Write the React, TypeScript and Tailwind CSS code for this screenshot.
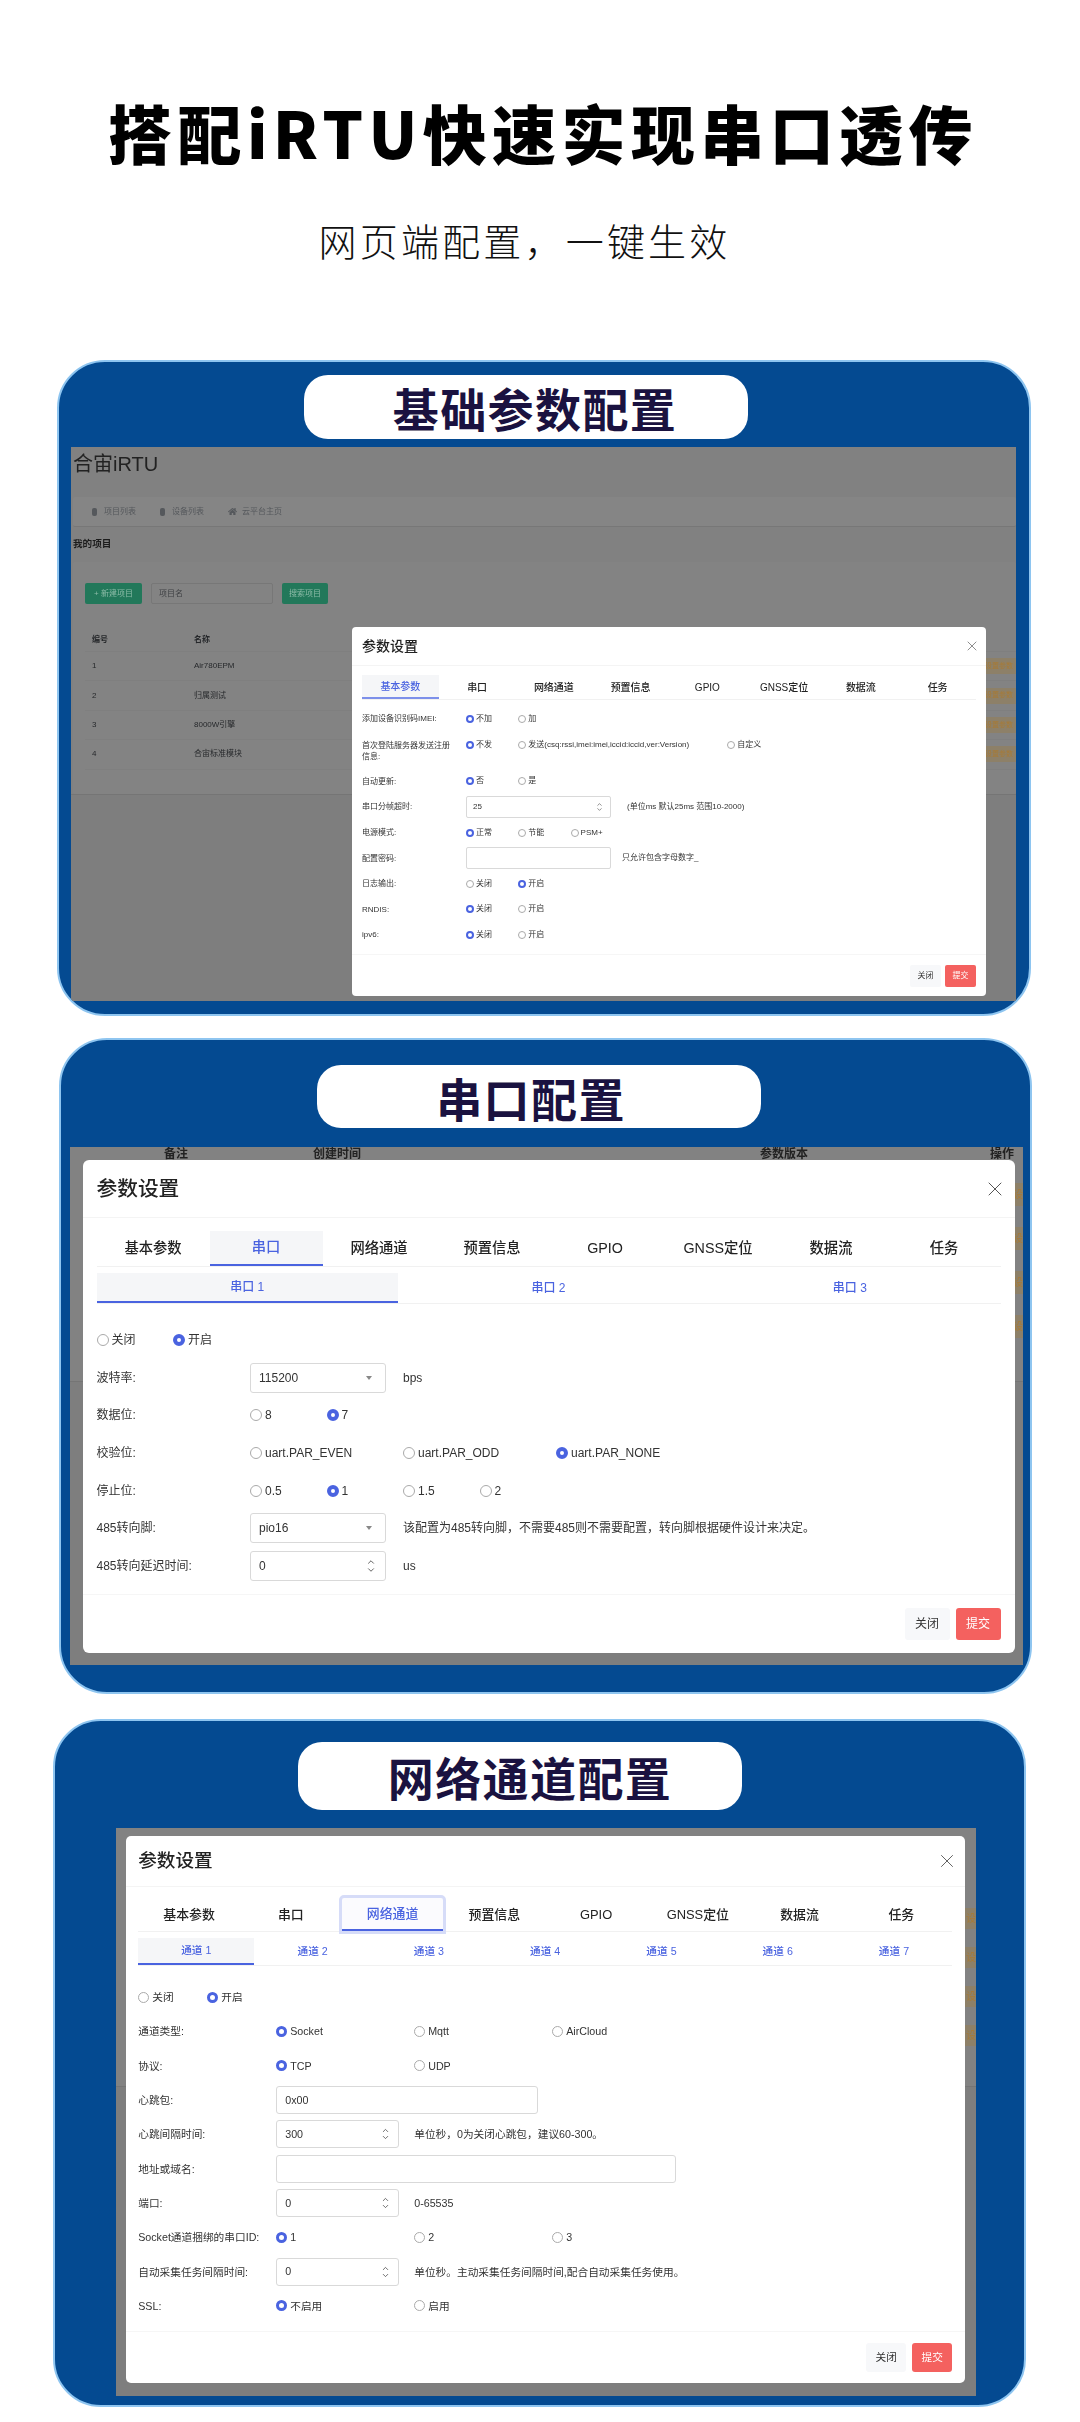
import { ChevronDown, ChevronUp, X } from "lucide-react";
import { FaHome } from "react-icons/fa";

type Theme = {
  modal: string;
  head: string;
  title: string;
  close: number;
  closeOffset: string;
  tabsWrap: string;
  tab: string;
  tabOn: string;
  subWrap: string;
  subTab: string;
  subOn: string;
  body: string;
  row: string;
  text: string;
  label: string;
  radio: string;
  radioOn: string;
  optGap: string;
  field: string;
  fieldPad: string;
  caret: string;
  spin: number;
  foot: string;
  btn: string;
};

const small: Theme = {
  modal: "left-[281px] top-[180px] w-[634px] h-[369px] px-[10px] rounded-[4px]",
  head: "h-[39px] -mx-[10px] px-[10px]",
  title: "text-[14px] font-medium",
  close: 16,
  closeOffset: "-mr-[4px]",
  tabsWrap: "mt-[9px] h-[25px]",
  tab: "w-[76.8px] text-[10px] font-medium",
  tabOn: "border-b-2 border-[#7d90ea] bg-[#f5f6f8] text-[#4a63e0]",
  subWrap: "hidden",
  subTab: "",
  subOn: "",
  body: "pt-[6px] h-[255px] -mx-[10px] px-[10px]",
  row: "h-[25.6px]",
  text: "text-[8px]",
  label: "w-[104px] pr-[12px] leading-[11px]",
  radio: "w-[8px] h-[8px] border-[0.7px] border-[#aaa]",
  radioOn: "w-[8px] h-[8px] border-[2.5px] border-[#4a63e0]",
  optGap: "gap-[2px]",
  field: "h-[22px] rounded-[2px]",
  fieldPad: "pl-[6px] pr-[7px]",
  caret: "",
  spin: 7,
  foot: "pt-[10px] gap-[4px]",
  btn: "w-[31px] h-[22px] text-[8px] rounded-[2px]",
};

const large: Theme = {
  modal: "left-[12.5px] top-[13px] w-[932px] h-[493px] px-[14px] rounded-[6px]",
  head: "h-[58px] -mx-[14px] px-[14px]",
  title: "text-[20.7px] font-medium",
  close: 24,
  closeOffset: "-mr-[6px]",
  tabsWrap: "mt-[13px] h-[36px]",
  tab: "w-[113px] text-[14.3px] font-medium",
  tabOn: "border-b-2 border-[#4a63e0] bg-[#f5f6f8] text-[#4a63e0]",
  subWrap: "mt-[6px] h-[31px]",
  subTab: "w-[301.7px] text-[12px] font-medium text-[#4a63e0]",
  subOn: "border-b-2 border-[#4a63e0] bg-[#f5f6f8]",
  body: "pt-[17px] h-[291px] -mx-[14px] px-[14px]",
  row: "h-[37.7px]",
  text: "text-[12px]",
  label: "w-[153.5px]",
  radio: "w-[12px] h-[12px] border-[1.5px] border-[#aaa]",
  radioOn: "w-[12px] h-[12px] border-[4px] border-[#4a63e0]",
  optGap: "gap-[3px]",
  field: "h-[30px] rounded-[3px]",
  fieldPad: "pl-[8px] pr-[9px]",
  caret: "border-l-[3.5px] border-r-[3.5px] border-t-[4px]",
  spin: 10,
  foot: "pt-[13px] gap-[6px]",
  btn: "w-[45px] h-[32px] text-[12px] rounded-[3px]",
};

const medium: Theme = {
  modal: "left-[9.7px] top-[8px] w-[839px] h-[547px] px-[12.5px] rounded-[5px]",
  head: "h-[51px] -mx-[12.5px] px-[12.5px]",
  title: "text-[18.6px] font-medium",
  close: 22,
  closeOffset: "-mr-[5.5px]",
  tabsWrap: "mt-[11px] h-[34px]",
  tab: "w-[101.8px] text-[12.9px] font-medium",
  tabOn: "border-b-2 border-[#4a63e0] text-[#4a63e0] rounded-t-[2px] outline outline-3 outline-[#d6dcf8] bg-[#fbfbfe]",
  subWrap: "mt-[6px] h-[28px]",
  subTab: "w-[116.3px] text-[10.7px] font-medium text-[#4a63e0]",
  subOn: "border-b-2 border-[#4a63e0] bg-[#f5f6f8]",
  body: "pt-[14px] h-[366px] -mx-[12.5px] px-[12.5px]",
  row: "h-[34.3px]",
  text: "text-[10.7px]",
  label: "w-[138px]",
  radio: "w-[11px] h-[11px] border-[1.3px] border-[#aaa]",
  radioOn: "w-[11px] h-[11px] border-[3.6px] border-[#4a63e0]",
  optGap: "gap-[3px]",
  field: "h-[28px] rounded-[3px]",
  fieldPad: "pl-[8px] pr-[8px]",
  caret: "",
  spin: 9,
  foot: "pt-[11px] gap-[6px]",
  btn: "w-[40px] h-[29px] text-[10.7px] rounded-[3px]",
};

const mainTabs = ["基本参数", "串口", "网络通道", "预置信息", "GPIO", "GNSS定位", "数据流", "任务"];

function Opt({ t, label, on, width }: { t: Theme; label: string; on?: boolean; width: string }) {
  return (
    <div className={`flex items-center ${t.optGap} ${width}`}>
      <span className={`shrink-0 rounded-full bg-white ${on ? t.radioOn : t.radio}`} />
      <span className="whitespace-nowrap">{label}</span>
    </div>
  );
}

function Row({ t, label, children, top }: { t: Theme; label?: string; children: React.ReactNode; top?: boolean }) {
  return (
    <div className={`flex ${top ? "items-start" : `items-center ${t.row}`} ${t.text} text-[#333]`}>
      {label !== undefined && <div className={`shrink-0 ${t.label}`}>{label}</div>}
      {children}
    </div>
  );
}

function Field({ t, value, width, kind }: { t: Theme; value?: string; width: string; kind?: "select" | "number" }) {
  return (
    <div
      className={`flex shrink-0 items-center justify-between border border-[#d9d9d9] bg-white ${t.field} ${t.fieldPad} ${width}`}
    >
      <span>{value}</span>
      {kind === "select" && <span className={`mr-[4px] border-transparent border-t-[#888] ${t.caret}`} />}
      {kind === "number" && (
        <span className="flex flex-col text-[#444]">
          <ChevronUp size={t.spin} strokeWidth={2} className="-mb-[1px]" />
          <ChevronDown size={t.spin} strokeWidth={2} className="-mt-[1px]" />
        </span>
      )}
    </div>
  );
}

function Modal({
  t,
  active,
  subs,
  children,
}: {
  t: Theme;
  active: number;
  subs?: string[];
  children: React.ReactNode;
}) {
  return (
    <div className={`absolute flex flex-col bg-white text-[#222] ${t.modal}`}>
      <div className={`flex shrink-0 items-center justify-between border-b border-[#f4f4f4] ${t.head}`}>
        <span className={t.title}>参数设置</span>
        <X size={t.close} strokeWidth={1} className={`text-[#555] ${t.closeOffset}`} />
      </div>
      <div className={`flex shrink-0 border-b border-[#f1f1f1] ${t.tabsWrap}`}>
        {mainTabs.map((name, i) => (
          <div key={name} className={`flex items-center justify-center ${t.tab} ${i === active ? t.tabOn : ""}`}>
            {name}
          </div>
        ))}
      </div>
      {subs && (
        <div className={`flex shrink-0 border-b border-[#f1f1f1] ${t.subWrap}`}>
          {subs.map((name, i) => (
            <div key={name} className={`flex items-center justify-center ${t.subTab} ${i === 0 ? t.subOn : ""}`}>
              {name}
            </div>
          ))}
        </div>
      )}
      <div className={`shrink-0 border-b border-[#f6f6f6] ${t.body}`}>{children}</div>
      <div className={`flex justify-end ${t.foot}`}>
        <div className={`flex items-center justify-center bg-[#f7f8fa] text-[#333] ${t.btn}`}>关闭</div>
        <div className={`flex items-center justify-center bg-[#f4615f] text-white ${t.btn}`}>提交</div>
      </div>
    </div>
  );
}

function Panel({
  wrap,
  pill,
  shot,
  title,
  children,
}: {
  wrap: string;
  pill: string;
  shot: string;
  title: string;
  children: React.ReactNode;
}) {
  return (
    <section className={`overflow-hidden rounded-[48px] border-2 border-[#8ec5f0] bg-[#044a91] ${wrap}`}>
      <div
        className={`flex items-center justify-center rounded-[24px] bg-white text-[46px] leading-none font-bold tracking-[1.4px] text-[#1a1240] font-['Noto_Sans_CJK_SC',sans-serif] ${pill}`}
      >
        {title}
      </div>
      <div className={`relative overflow-hidden bg-[#7e7e7e] blur-[0.3px] ${shot}`}>{children}</div>
    </section>
  );
}

function BasicBackdrop() {
  const rows = [
    ["1", "Air780EPM"],
    ["2", "归属测试"],
    ["3", "8000W引擎"],
    ["4", "合宙标准模块"],
  ];
  return (
    <div className="h-[348px] border-b border-[#757575] bg-[#818181] pl-[2px] text-[#26282b]">
      <div className="h-[50px] pt-[3px] text-[20px] leading-[28px] text-[#222]">合宙iRTU</div>
      <div className="flex h-[30px] items-center rounded-[2px] border-b border-[#777] bg-[#858585] pl-[19px] text-[8px] text-[#55585c]">
        <span className="h-[8px] w-[5px] rounded-[2px] bg-[#55585c]" />
        <span className="ml-[7px] w-[56px]">项目列表</span>
        <span className="h-[8px] w-[5px] rounded-[2px] bg-[#55585c]" />
        <span className="ml-[7px] w-[56px]">设备列表</span>
        <FaHome size={9} />
        <span className="ml-[5px]">云平台主页</span>
      </div>
      <div className="flex h-[35px] items-center text-[9.6px] font-bold text-[#1c1c1c]">我的项目</div>
      <div className="h-[232px] rounded-[2px] bg-[#838383] pt-[21px] pl-[12px]">
        <div className="flex h-[21px] items-center gap-[9px] text-[8px]">
          <div className="flex h-full w-[57px] items-center justify-center rounded-[2px] bg-[#22785a] text-[#8dbca8]">+ 新建项目</div>
          <div className="flex h-full w-[122px] items-center rounded-[2px] border border-[#777] pl-[7px] text-[#3f4144]">项目名</div>
          <div className="flex h-full w-[46px] items-center justify-center rounded-[2px] bg-[#22785a] text-[#8dbca8]">搜索项目</div>
        </div>
        <div className="mt-[24px] flex h-[24px] items-center border-b border-[#7f7f7f] text-[8px] font-bold">
          <span className="ml-[7px] w-[102px]">编号</span>
          <span>名称</span>
        </div>
        {rows.map(([no, name]) => (
          <div key={no} className="flex h-[29.4px] items-center border-b border-[#7f7f7f] text-[8px]">
            <span className="ml-[7px] w-[102px]">{no}</span>
            <span>{name}</span>
            <span className="ml-auto flex h-[16px] w-[40px] items-center justify-end rounded-l-[2px] bg-[#8d8068] pr-[3px] text-[7px] whitespace-nowrap text-[#a87a35]">
              设置参数
            </span>
          </div>
        ))}
      </div>
    </div>
  );
}

function SideFlags({ height, list, flag }: { height: string; list: string; flag: string }) {
  return (
    <div className={`flex flex-col items-end bg-[#828282] ${height} ${list}`}>
      {[0, 1, 2, 3].map((i) => (
        <div key={i} className={`flex items-center justify-end overflow-hidden bg-[#8d8068] text-[#a87a35] ${flag}`}>
          设
        </div>
      ))}
    </div>
  );
}

export default function App() {
  return (
    <div className="h-[2422px] w-[1080px] overflow-hidden bg-white font-['Liberation_Sans','Noto_Sans_CJK_SC',sans-serif]">
      <h1 className="mt-[91px] h-[80px] pl-[6px] text-center text-[64px] leading-[80px] font-black tracking-[5.4px] text-black font-['Noto_Sans_CJK_SC',sans-serif]">
        搭配iRTU快速实现串口透传
      </h1>
      <p className="mt-[44px] h-[50px] pr-[31px] text-center text-[38px] leading-[50px] font-light tracking-[3.2px] text-[#111] font-['Noto_Sans_CJK_SC',sans-serif]">
        网页端配置，一键生效
      </p>

      {/* 基础参数 */}
      <Panel
        wrap="mt-[95px] ml-[57px] h-[656px] w-[974px]"
        pill="mt-[13px] ml-[245px] h-[64px] w-[444px] pl-[18px]"
        shot="mt-[8px] ml-[12px] h-[554px] w-[945px]"
        title="基础参数配置"
      >
        <BasicBackdrop />
        <Modal t={small} active={0}>
          <Row t={small} label="添加设备识别码IMEI:">
            <Opt t={small} label="不加" on width="w-[52.3px]" />
            <Opt t={small} label="加" width="w-[52.3px]" />
          </Row>
          <div className="h-[37px] pt-[8px]">
            <Row t={small} label="首次登陆服务器发送注册信息:" top>
              <Opt t={small} label="不发" on width="w-[52.3px] h-[11px]" />
              <Opt t={small} label="发送(csq:rssi,imei:imei,iccid:iccid,ver:Version)" width="w-[209px] h-[11px]" />
              <Opt t={small} label="自定义" width="w-[52.3px] h-[11px]" />
            </Row>
          </div>
          <Row t={small} label="自动更新:">
            <Opt t={small} label="否" on width="w-[52.3px]" />
            <Opt t={small} label="是" width="w-[52.3px]" />
          </Row>
          <Row t={small} label="串口分帧超时:">
            <Field t={small} value="25" width="w-[145px]" kind="number" />
            <span className="ml-[16px]">(单位ms 默认25ms 范围10-2000)</span>
          </Row>
          <Row t={small} label="电源模式:">
            <Opt t={small} label="正常" on width="w-[52.3px]" />
            <Opt t={small} label="节能" width="w-[52.3px]" />
            <Opt t={small} label="PSM+" width="w-[52.3px]" />
          </Row>
          <Row t={small} label="配置密码:">
            <Field t={small} width="w-[145px]" />
            <span className="ml-[11px]">只允许包含字母数字_</span>
          </Row>
          <Row t={small} label="日志输出:">
            <Opt t={small} label="关闭" width="w-[52.3px]" />
            <Opt t={small} label="开启" on width="w-[52.3px]" />
          </Row>
          <Row t={small} label="RNDIS:">
            <Opt t={small} label="关闭" on width="w-[52.3px]" />
            <Opt t={small} label="开启" width="w-[52.3px]" />
          </Row>
          <Row t={small} label="ipv6:">
            <Opt t={small} label="关闭" on width="w-[52.3px]" />
            <Opt t={small} label="开启" width="w-[52.3px]" />
          </Row>
        </Modal>
      </Panel>

      {/* 串口 */}
      <Panel
        wrap="mt-[22px] ml-[59px] h-[656px] w-[973px]"
        pill="mt-[25px] ml-[256px] h-[63px] w-[444px] pr-[16px]"
        shot="mt-[19px] ml-[9px] h-[518px] w-[953px]"
        title="串口配置"
      >
        <div className="h-[235px] border-b border-[#757575] bg-[#828282]">
          <div className="flex h-[13px] items-center text-[12px] font-bold whitespace-nowrap text-[#222]">
            <span className="ml-[94px] w-[149px]">备注</span>
            <span className="w-[447px]">创建时间</span>
            <span className="w-[230px]">参数版本</span>
            <span>操作</span>
          </div>
          <SideFlags height="h-[221px]" list="pt-[23px] gap-[21px]" flag="h-[23px] w-[9px] text-[10px]" />
        </div>
        <Modal t={large} active={1} subs={["串口 1", "串口 2", "串口 3"]}>
          <Row t={large}>
            <Opt t={large} label="关闭" width="w-[76.5px]" />
            <Opt t={large} label="开启" on width="w-[76.5px]" />
          </Row>
          <Row t={large} label="波特率:">
            <Field t={large} value="115200" width="w-[136px]" kind="select" />
            <span className="ml-[17px]">bps</span>
          </Row>
          <Row t={large} label="数据位:">
            <Opt t={large} label="8" width="w-[76.5px]" />
            <Opt t={large} label="7" on width="w-[76.5px]" />
          </Row>
          <Row t={large} label="校验位:">
            <Opt t={large} label="uart.PAR_EVEN" width="w-[153px]" />
            <Opt t={large} label="uart.PAR_ODD" width="w-[153px]" />
            <Opt t={large} label="uart.PAR_NONE" on width="w-[153px]" />
          </Row>
          <Row t={large} label="停止位:">
            <Opt t={large} label="0.5" width="w-[76.5px]" />
            <Opt t={large} label="1" on width="w-[76.5px]" />
            <Opt t={large} label="1.5" width="w-[76.5px]" />
            <Opt t={large} label="2" width="w-[76.5px]" />
          </Row>
          <Row t={large} label="485转向脚:">
            <Field t={large} value="pio16" width="w-[136px]" kind="select" />
            <span className="ml-[17px]">该配置为485转向脚，不需要485则不需要配置，转向脚根据硬件设计来决定。</span>
          </Row>
          <Row t={large} label="485转向延迟时间:">
            <Field t={large} value="0" width="w-[136px]" kind="number" />
            <span className="ml-[17px]">us</span>
          </Row>
        </Modal>
      </Panel>

      {/* 网络通道 */}
      <Panel
        wrap="mt-[25px] ml-[53px] h-[688px] w-[973px]"
        pill="mt-[21px] ml-[243px] h-[68px] w-[444px] pl-[20px]"
        shot="mt-[18px] ml-[61px] h-[568px] w-[860px]"
        title="网络通道配置"
      >
        <div className="h-[259px] border-b border-[#757575]">
          <SideFlags height="h-[258px]" list="pt-[80px] gap-[18.5px]" flag="h-[20.5px] w-[11px] text-[10px]" />
        </div>
        <Modal
          t={medium}
          active={2}
          subs={["通道 1", "通道 2", "通道 3", "通道 4", "通道 5", "通道 6", "通道 7"]}
        >
          <Row t={medium}>
            <Opt t={medium} label="关闭" width="w-[69px]" />
            <Opt t={medium} label="开启" on width="w-[69px]" />
          </Row>
          <Row t={medium} label="通道类型:">
            <Opt t={medium} label="Socket" on width="w-[138px]" />
            <Opt t={medium} label="Mqtt" width="w-[138px]" />
            <Opt t={medium} label="AirCloud" width="w-[138px]" />
          </Row>
          <Row t={medium} label="协议:">
            <Opt t={medium} label="TCP" on width="w-[138px]" />
            <Opt t={medium} label="UDP" width="w-[138px]" />
          </Row>
          <Row t={medium} label="心跳包:">
            <Field t={medium} value="0x00" width="w-[262px]" />
          </Row>
          <Row t={medium} label="心跳间隔时间:">
            <Field t={medium} value="300" width="w-[123px]" kind="number" />
            <span className="ml-[15px]">单位秒，0为关闭心跳包，建议60-300。</span>
          </Row>
          <Row t={medium} label="地址或域名:">
            <Field t={medium} width="w-[400px]" />
          </Row>
          <Row t={medium} label="端口:">
            <Field t={medium} value="0" width="w-[123px]" kind="number" />
            <span className="ml-[15px]">0-65535</span>
          </Row>
          <Row t={medium} label="Socket通道捆绑的串口ID:">
            <Opt t={medium} label="1" on width="w-[138px]" />
            <Opt t={medium} label="2" width="w-[138px]" />
            <Opt t={medium} label="3" width="w-[138px]" />
          </Row>
          <Row t={medium} label="自动采集任务间隔时间:">
            <Field t={medium} value="0" width="w-[123px]" kind="number" />
            <span className="ml-[15px]">单位秒。主动采集任务间隔时间,配合自动采集任务使用。</span>
          </Row>
          <Row t={medium} label="SSL:">
            <Opt t={medium} label="不启用" on width="w-[138px]" />
            <Opt t={medium} label="启用" width="w-[138px]" />
          </Row>
        </Modal>
      </Panel>
    </div>
  );
}
